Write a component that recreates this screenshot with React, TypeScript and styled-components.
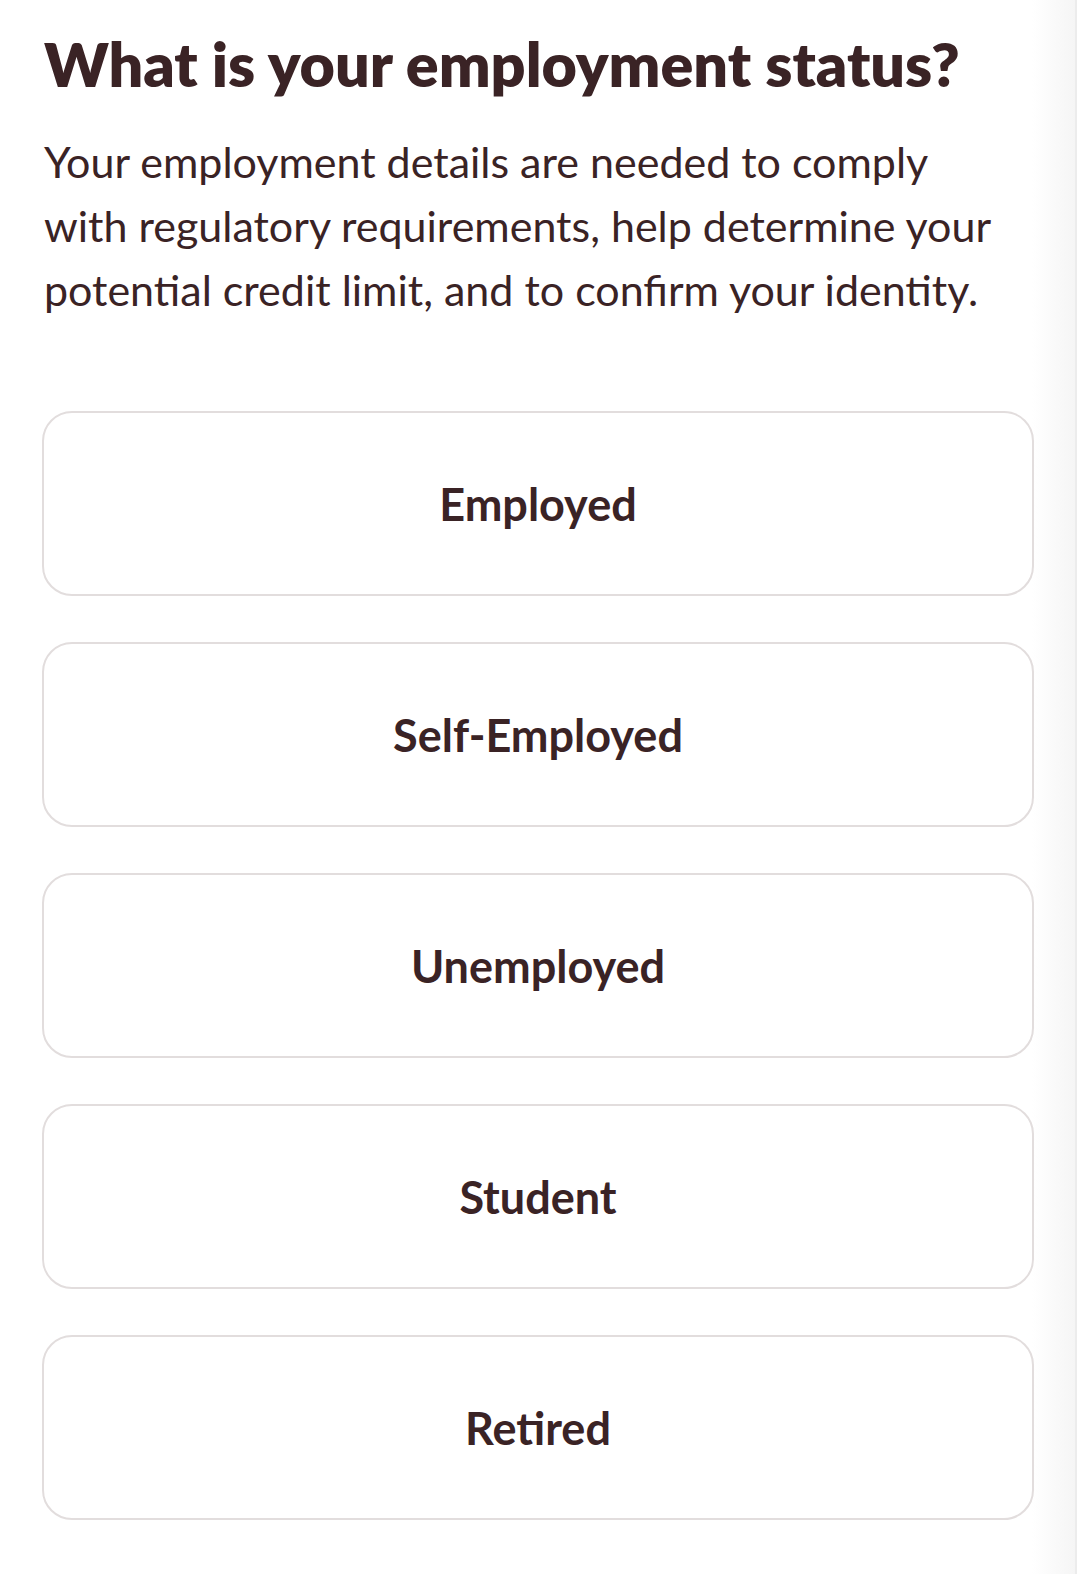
import React from 'react';
import styled, {createGlobalStyle} from "styled-components";

const GlobalStyle = createGlobalStyle`
    body {
        margin: 0;
        background: #ffffff;
        font-family: Lato, "Open Sans", sans-serif;
    }
`

const options = ['Employed', 'Self-Employed', 'Unemployed', 'Student', 'Retired'];

export default function App() {
    return (
        <>
            <GlobalStyle/>
            <Page>
                <Title>What is your employment status?</Title>
                <Lead>
                    Your employment details are needed to comply with regulatory requirements, help
                    determine your potential credit limit, and to confirm your identity.
                </Lead>
                <OptionList>
                    {options.map(option => (
                        <OptionButton key={option} type="button">{option}</OptionButton>
                    ))}
                </OptionList>
            </Page>
        </>
    );
}

const Page = styled.main`
    box-sizing: border-box;
    width: 1077px;
    min-height: 1574px;
    padding: 29px 41px 0 42px;
    border-right: 2px solid #ececec;
    background: linear-gradient(to right, #ffffff 0, #ffffff 1032px, #f5f5f5 1075px);
    color: #3a2325;
`

const Title = styled.h1`
    margin: 0 0 0 2px;
    font-size: 61px;
    font-weight: 800;
    line-height: 70px;
    letter-spacing: 0;
    white-space: nowrap;
`

const Lead = styled.p`
    margin: 31px 0 0 2px;
    font-size: 43px;
    font-weight: 400;
    line-height: 64px;
    max-width: 960px;
`

const OptionList = styled.div`
    display: flex;
    flex-direction: column;
    gap: 46px;
    margin-top: 89px;
`

const OptionButton = styled.button`
    box-sizing: border-box;
    height: 185px;
    border: 2px solid #e2dddd;
    border-radius: 30px;
    background: #ffffff;
    color: #3a2325;
    font-family: inherit;
    font-size: 45px;
    font-weight: 700;
    cursor: pointer;
`
